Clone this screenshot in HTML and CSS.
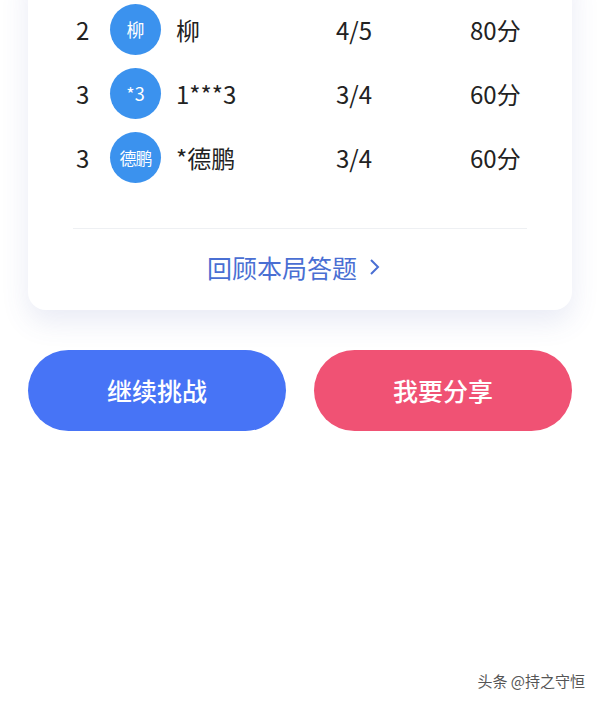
FILE: index.html
```html
<!DOCTYPE html>
<html lang="zh-CN">
<head>
  <meta charset="UTF-8">
  <meta name="viewport" content="width=device-width, initial-scale=1.0">
  <title>答题结果</title>
  <link rel="stylesheet" href="styles.css">
</head>
<body>
  <div class="page">
    <div class="card">
      <div class="rank-list">
        <div class="row">
          <span class="rank">2</span>
          <span class="avatar">柳</span>
          <span class="name">柳</span>
          <span class="score">4/5</span>
          <span class="points">80分</span>
        </div>
        <div class="row">
          <span class="rank">3</span>
          <span class="avatar">*3</span>
          <span class="name">1***3</span>
          <span class="score">3/4</span>
          <span class="points">60分</span>
        </div>
        <div class="row">
          <span class="rank">3</span>
          <span class="avatar small">德鹏</span>
          <span class="name">*德鹏</span>
          <span class="score">3/4</span>
          <span class="points">60分</span>
        </div>
      </div>
      <a class="review" href="#">
        回顾本局答题
        <svg width="12" height="18" viewBox="0 0 12 18"><polyline points="2,2 9,9 2,16" fill="none" stroke="#4a6fd3" stroke-width="2"/></svg>
      </a>
    </div>

    <div class="actions">
      <button class="btn btn-blue">继续挑战</button>
      <button class="btn btn-pink">我要分享</button>
    </div>

    <div class="footer">头条 @持之守恒</div>
  </div>
</body>
</html>
```
FILE: styles.css
```css
html, body { margin: 0; padding: 0; height: 100%; overflow: hidden; background: #fff; }
body { font-family: "Noto Sans CJK SC", "Noto Sans", sans-serif; color: #222; }
.page { display: flex; flex-direction: column; height: 100%; }

.card { margin: -40px 28px 0; padding-top: 37px; background: #fff; border-radius: 18px; box-shadow: 0 12px 28px rgba(70, 90, 170, 0.12); }
.rank-list { margin: 0 45px; padding-bottom: 39px; border-bottom: 1px solid #eef0f3; }
.row { display: flex; align-items: center; height: 64px; font-size: 24px; }
.rank { width: 37px; padding-left: 3px; box-sizing: border-box; }
.avatar { width: 51px; height: 51px; border-radius: 50%; background: #3b92ee; color: #fff; font-size: 18px; display: flex; align-items: center; justify-content: center; margin-right: 15px; }
.avatar.small { font-size: 17px; letter-spacing: -1px; }
.name { width: 160px; }
.score { width: 134px; }
.points { flex: 1; }

.review { display: flex; align-items: center; justify-content: center; gap: 12px; height: 81px; box-sizing: border-box; padding: 0 12px 5px 0; color: #4a6fd3; font-size: 25px; text-decoration: none; }

.actions { display: flex; gap: 28px; margin: 40px 28px 0; }
.btn { flex: 1; height: 81px; padding-bottom: 3px; border: none; border-radius: 41px; color: #fff; font-family: inherit; font-size: 25px; font-weight: 500; }
.btn-blue { background: #4774f6; }
.btn-pink { background: #f05274; }

.footer { margin-top: auto; padding: 0 15px 10px 0; text-align: right; font-size: 15px; color: #555; text-shadow: 0 0 2px #fff; }
```
